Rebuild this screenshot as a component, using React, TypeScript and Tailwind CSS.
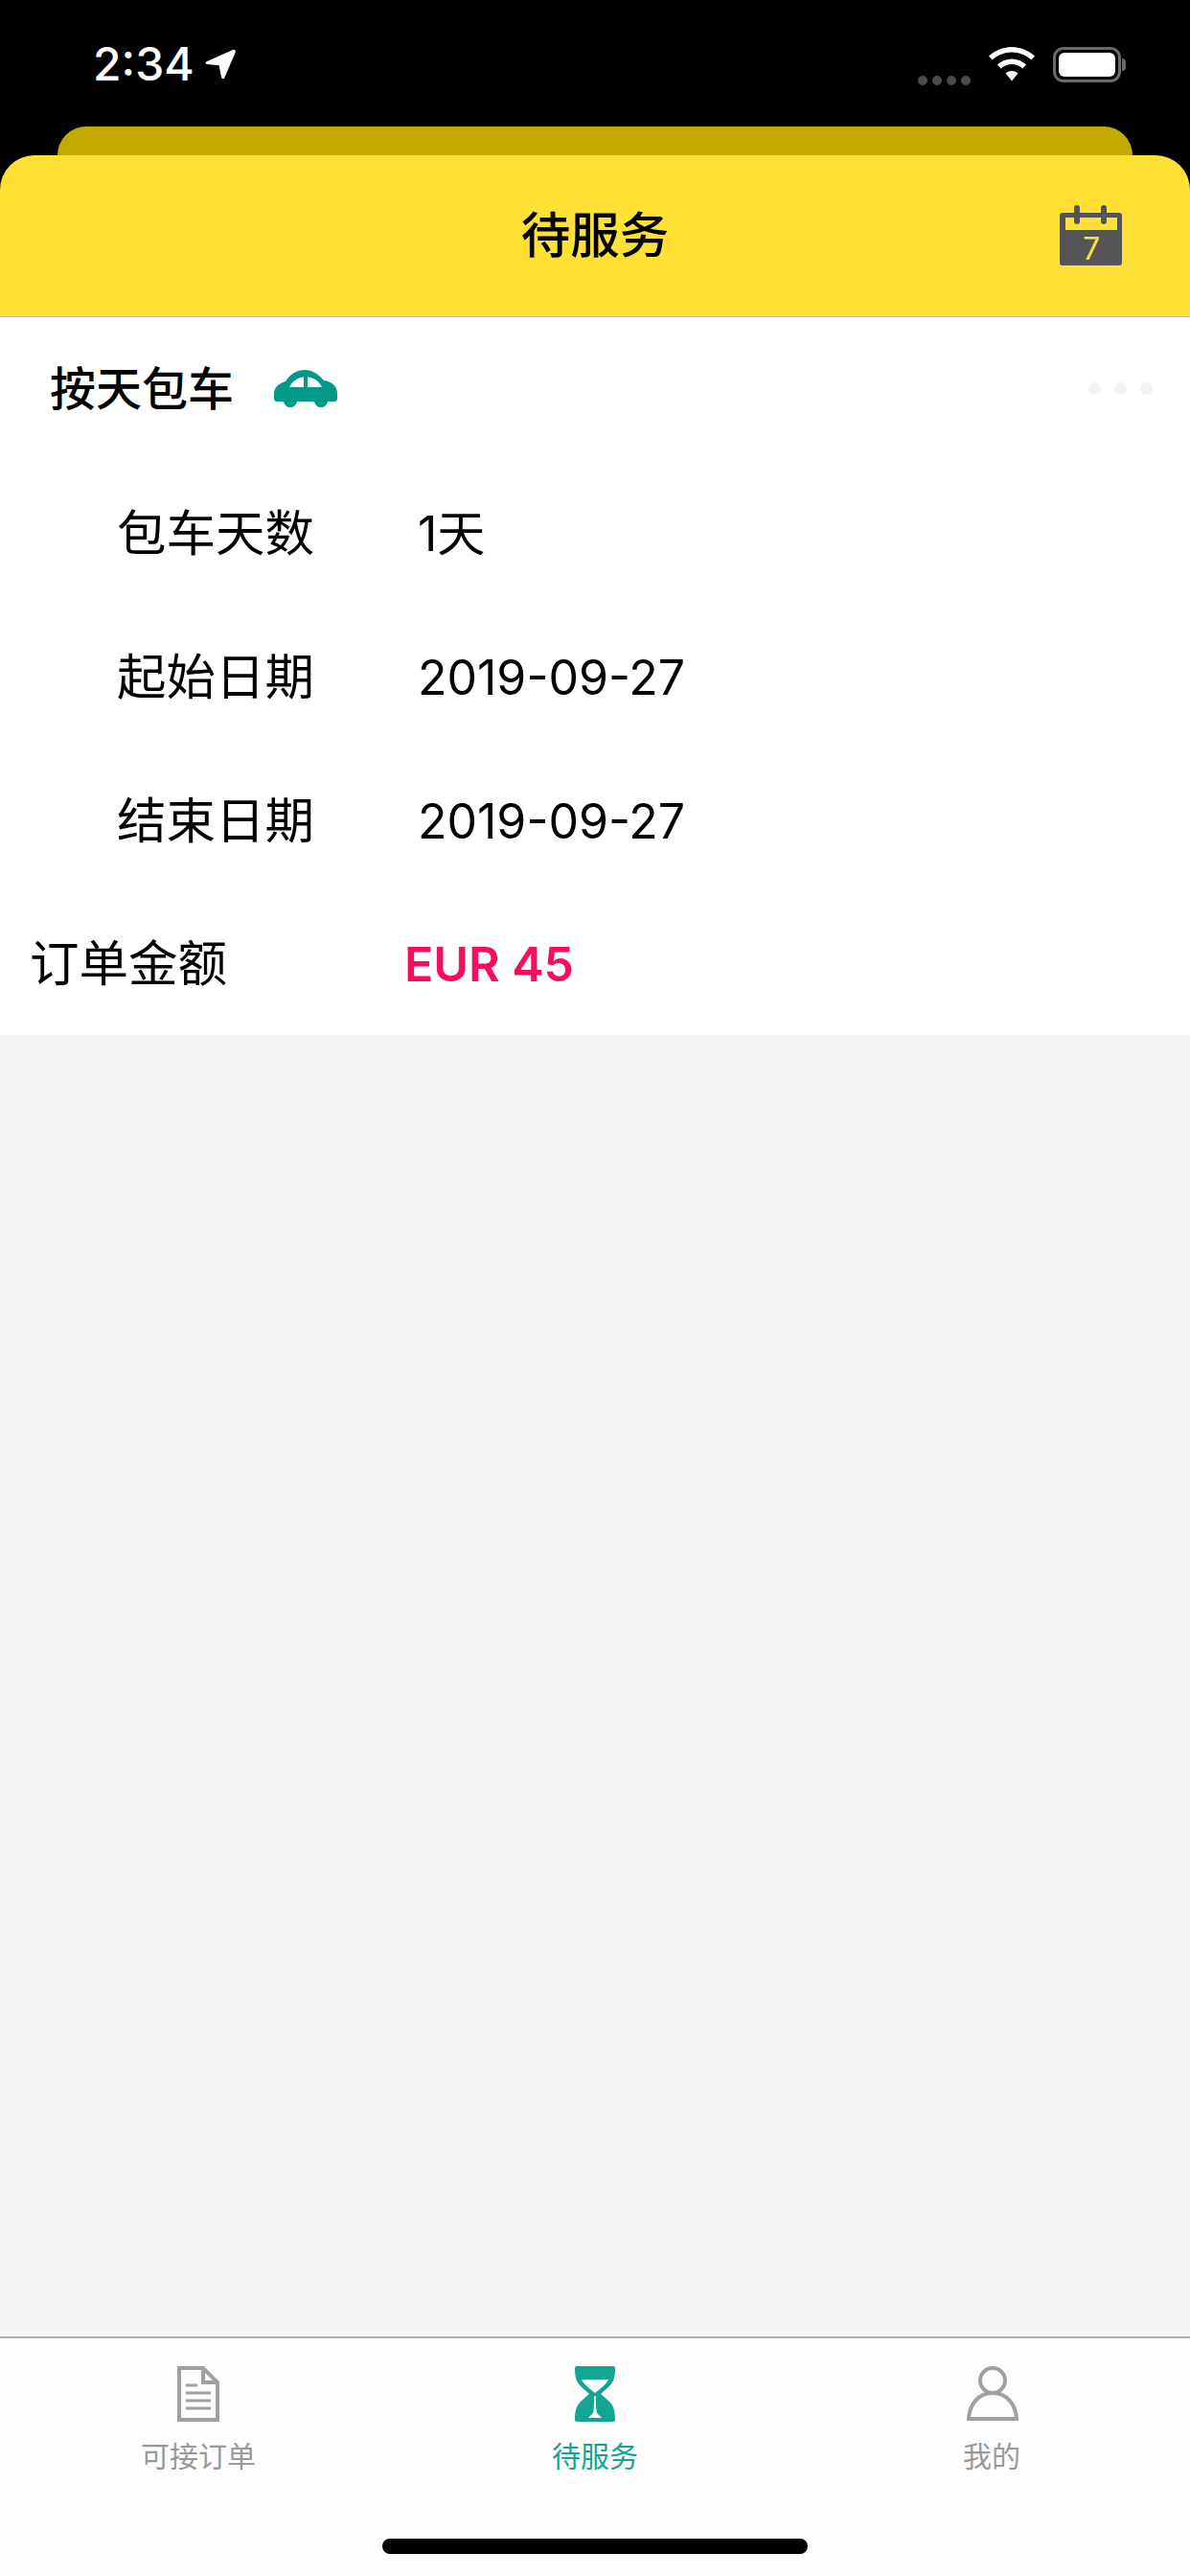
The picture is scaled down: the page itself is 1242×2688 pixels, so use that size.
const FONT = "font-['Inter','Noto_Sans_CJK_SC',sans-serif]";

function LocationArrow() {
  return (
    <svg width="33" height="32" viewBox="0 0 33 32" className="ml-[11px]">
      <path d="M1.500 13.200 29 .9c1.800-.8 3.500.9 2.700 2.700L20.400 30c-.7 1.700-2.900 1.500-3.300-.3l-2.500-12.500-12.500-1.100c-1.900-.2-2.300-2.100-.6-2.900Z" fill="#fff" />
    </svg>
  );
}

function SignalDots() {
  return (
    <div className="flex gap-[5px] mt-[30px]">
      <div className="w-[10px] h-[10px] rounded-full bg-[#4a4a4a]" />
      <div className="w-[10px] h-[10px] rounded-full bg-[#4a4a4a]" />
      <div className="w-[10px] h-[10px] rounded-full bg-[#4a4a4a]" />
      <div className="w-[10px] h-[10px] rounded-full bg-[#4a4a4a]" />
    </div>
  );
}

function Wifi() {
  return (
    <svg width="48" height="36" viewBox="0 0 48 36">
      <path d="M24 0c9 0 17.500 3.500 24 9.600l-3.600 4C39 8.500 31.800 5.500 24 5.500S9 8.500 3.600 13.600L0 9.600C6.500 3.500 15 0 24 0Z" fill="#fff" />
      <path d="M24 12.500c5.700 0 10.900 2.200 15 6l-3.700 4c-3-2.800-6.900-4.500-11.300-4.500s-8.300 1.700-11.300 4.500l-3.700-4c4.100-3.800 9.300-6 15-6Z" fill="#fff" />
      <path d="M24 25c2.500 0 4.800 1 6.500 2.500L24 35.500l-6.500-8C19.200 26 21.500 25 24 25Z" fill="#fff" />
    </svg>
  );
}

function Battery() {
  return (
    <div className="flex items-center">
      <div className="w-[71px] h-[37px] rounded-[11px] border-[3px] border-[#6a6a6a] p-[3px]">
        <div className="w-full h-full rounded-[6px] bg-white" />
      </div>
      <div className="w-[4px] h-[13px] ml-[1px] rounded-r-full bg-[#6a6a6a]" />
    </div>
  );
}

function CalendarIcon() {
  return (
    <svg width="66" height="64" viewBox="0 0 66 64">
      <rect x="0" y="8" width="65" height="55" rx="3" fill="#555" />
      <rect x="6" y="13" width="54" height="13" fill="#ffe135" />
      <rect x="15" y="0" width="6" height="20" rx="3" fill="#555" />
      <rect x="43" y="0" width="6" height="20" rx="3" fill="#555" />
      <text x="33" y="57" textAnchor="middle" fontSize="32" fontFamily="Inter, sans-serif" fill="#ffe135">7</text>
    </svg>
  );
}

function CarIcon() {
  return (
    <svg width="66" height="40" viewBox="0 0 66 40">
      <path d="M0 25c0-7 5-11 12-13C17 4 24 0 32 0c8 0 14 4 20 11 8 1 14 6 14 13v6c0 2-1 3-3 3h-7c-1 4-4 6-7 6s-6-2-7-6H24c-1 4-4 6-7 6s-6-2-7-6H3c-2 0-3-1-3-3v-5Z" fill="#009a87" />
      <path d="M16 18c3-6 8-10 15-10.500V18H16Z" fill="#fff" />
      <path d="M35 7.500c6 .5 12 4 15 10.500H35V7.500Z" fill="#fff" />
    </svg>
  );
}

function DocIcon() {
  return (
    <svg width="44" height="58" viewBox="0 0 44 58" fill="none" stroke="#a0a0a0" strokeWidth="4">
      <path d="M2 2h25l15 15v39H2V2Z" />
      <path d="M27 2v15h15" />
      <path d="M9 20h12M9 28h26M9 36h26M9 44h26" strokeWidth="3" />
    </svg>
  );
}

function HourglassIcon() {
  return (
    <svg width="44" height="58" viewBox="0 0 44 58">
      <path d="M1 2c0-1 1-2 2-2h38c1 0 2 1 2 2 0 8-1 14-6 19l-9 8 9 8c5 5 6 11 6 19 0 1-1 2-2 2H3c-1 0-2-1-2-2 0-8 1-14 6-19l9-8-9-8C2 16 1 10 1 2Z" fill="#12a594" />
      <path d="M8 14h28c-2 4-5 7-14 14C13 21 10 18 8 14Z" fill="#fff" />
      <path d="M21.300 31h1.400c0 8 .5 14 1.300 18l5 5H15l5-5c.8-4 1.300-10 1.300-18Z" fill="#fff" />
    </svg>
  );
}

function PersonIcon() {
  return (
    <svg width="54" height="58" viewBox="0 0 54 58" fill="none" stroke="#a0a0a0" strokeWidth="4" className="ml-[2px]">
      <circle cx="27" cy="15" r="13" />
      <path d="M2 55c1-15 10-27 25-27s24 12 25 27H2Z" />
    </svg>
  );
}

function InfoRow({ label, value }: { label: string; value: string }) {
  return (
    <div className="flex items-center h-[150px] pl-[122px]">
      <span className="w-[314px] text-[51.500px] text-black">{label}</span>
      <span className="text-[50px] text-black">{value}</span>
    </div>
  );
}

function Tab({ icon, label, active }: { icon: React.ReactNode; label: string; active?: boolean }) {
  return (
    <div className="flex flex-col items-center pt-[28px]">
      <div className="h-[60px] flex items-center justify-center">{icon}</div>
      <span className={active ? "mt-[10px] text-[30px] leading-[50px] text-[#12a594]" : "mt-[10px] text-[30px] leading-[50px] text-[#999999]"}>
        {label}
      </span>
    </div>
  );
}

export default function App() {
  return (
    <div className={`${FONT} w-[1242px] h-[2688px] flex flex-col bg-black overflow-hidden`}>
      <div className="h-[132px] flex justify-between pl-[97px] pr-[67px] pt-[45px] shrink-0">
        <div className="flex items-center h-[44px]">
          <span className="text-[48px] font-medium leading-none text-white">2:34</span>
          <LocationArrow />
        </div>
        <div className="flex items-start gap-[19px] pt-[4px]">
          <SignalDots />
          <Wifi />
          <Battery />
        </div>
      </div>

      <div className="mx-[60px] h-[30px] rounded-t-[30px] bg-[#c2aa00] shrink-0" />

      <header className="h-[169px] shrink-0 grid grid-cols-[1fr_auto_1fr] items-center rounded-t-[36px] bg-[#ffe135] border-b border-[#b8b8b8]">
        <div />
        <h1 className="text-[51.500px] font-medium text-black">待服务</h1>
        <div className="flex justify-end pr-[70px]">
          <CalendarIcon />
        </div>
      </header>

      <main className="flex-1 bg-[#f5f5f5]">
        <section className="bg-white h-[749px]">
          <div className="flex items-center justify-between h-[149px] mb-[2px] pl-[52px] pr-[39px]">
            <div className="flex items-center gap-[42px]">
              <span className="text-[48px] font-medium text-black">按天包车</span>
              <CarIcon />
            </div>
            <div className="flex gap-[14px]">
              <div className="w-[13px] h-[13px] rounded-full bg-[#f3f3f3]" />
              <div className="w-[13px] h-[13px] rounded-full bg-[#f3f3f3]" />
              <div className="w-[13px] h-[13px] rounded-full bg-[#f3f3f3]" />
            </div>
          </div>
          <InfoRow label="包车天数" value="1天" />
          <InfoRow label="起始日期" value="2019-09-27" />
          <InfoRow label="结束日期" value="2019-09-27" />
          <div className="flex items-center h-[148px] pl-[31px]">
            <span className="w-[391px] text-[51.500px] text-black">订单金额</span>
            <span className="text-[50px] font-semibold text-[#f50e5e]">EUR 45</span>
          </div>
        </section>
      </main>

      <nav className="h-[250px] shrink-0 grid grid-cols-3 bg-[#fdfdfd] border-t-2 border-[#b0b0b0] relative">
        <Tab icon={<DocIcon />} label="可接订单" />
        <Tab icon={<HourglassIcon />} label="待服务" active />
        <Tab icon={<PersonIcon />} label="我的" />
        <div className="absolute left-[399px] top-[209px] w-[444px] h-[16px] rounded-full bg-black" />
      </nav>
    </div>
  );
}
